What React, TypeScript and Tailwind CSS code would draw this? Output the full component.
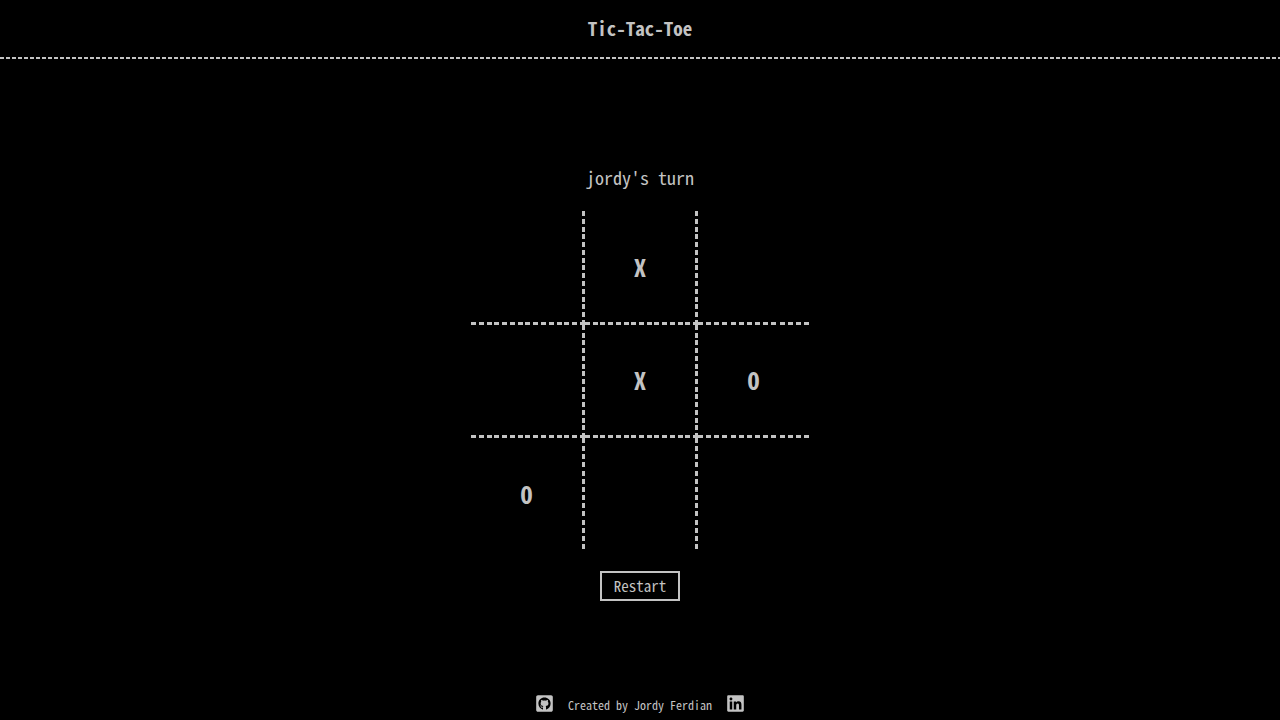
import { useState } from 'react';
import { FaGithubSquare, FaLinkedin } from 'react-icons/fa';

const start = ['', 'X', '', '', 'X', 'O', 'O', '', ''];

const rowLine: Record<number, string> = {
  0: 'bg-[repeating-linear-gradient(to_right,#c3c3c3_0_5px,transparent_5px_calc((100%-5px)/14))]',
  1: 'bg-[repeating-linear-gradient(to_right,#c3c3c3_0_5px,transparent_5px_calc((100%-5px)/14))]',
  2: 'bg-[repeating-linear-gradient(to_right,#c3c3c3_0_5px,transparent_5px_calc((100%-5px)/13))]',
};

const columnLine: Record<number, string> = {
  0: 'bg-[repeating-linear-gradient(to_bottom,#c3c3c3_0_5px,transparent_5px_calc((100%-5px)/14))]',
  1: 'bg-[repeating-linear-gradient(to_bottom,#c3c3c3_0_5px,transparent_5px_calc((100%-5px)/14))]',
  2: 'bg-[repeating-linear-gradient(to_bottom,#c3c3c3_0_5px,transparent_5px_calc((100%-5px)/13))]',
};

type SquareProps = {
  index: number;
  mark: string;
  onPlay: () => void;
};

function Square({ index, mark, onPlay }: SquareProps) {
  const column = index % 3;
  const row = Math.floor(index / 3);
  return (
    <div className="relative flex">
      <button
        type="button"
        aria-label={`Square ${index + 1} ${mark}`}
        onClick={onPlay}
        className={`flex flex-1 items-center justify-center text-2xl font-bold ${column < 2 ? 'pr-[3px]' : ''} ${row < 2 ? 'pb-[3px]' : ''}`}
      >
        {mark}
      </button>
      {column < 2 && <span className={`absolute inset-y-0 right-0 w-[3px] ${columnLine[row]}`} />}
      {row < 2 && <span className={`absolute inset-x-0 bottom-0 h-[3px] ${rowLine[column]}`} />}
    </div>
  );
}

export default function App() {
  const [cells, setCells] = useState(start);
  const [turn, setTurn] = useState('X');

  const play = (index: number) => {
    if (cells[index]) return;
    setCells(cells.map((cell, i) => (i === index ? turn : cell)));
    setTurn(turn === 'X' ? 'O' : 'X');
  };

  const restart = () => {
    setCells(Array(9).fill(''));
    setTurn('X');
  };

  return (
    <div className="flex min-h-screen flex-col bg-black font-['Noto_Sans_Mono_CJK_JP','Liberation_Mono',monospace] text-[#c3c3c3]">
      <header>
        <h1 className="pt-[15px] pb-[17px] text-center text-[19px] leading-[25px] font-bold">Tic-Tac-Toe</h1>
        <div className="h-0.5 bg-[repeating-linear-gradient(to_right,#c3c3c3_0_4px,transparent_4px_6px)]" />
      </header>
      <main className="flex flex-1 flex-col items-center justify-center pt-4">
        <p className="mb-[22px] text-lg leading-6">jordy's turn</p>
        <div className="grid grid-cols-[114px_113px_111px] grid-rows-[114px_113px_111px]">
          {cells.map((cell, index) => (
            <Square key={index} index={index} mark={cell} onPlay={() => play(index)} />
          ))}
        </div>
        <button
          type="button"
          onClick={restart}
          className="mt-[22px] h-[30px] w-20 border-2 border-[#c3c3c3] text-[15px] leading-6"
        >
          Restart
        </button>
      </main>
      <footer className="flex items-center justify-center gap-3.5 pb-[5px]">
        <a href="#github" aria-label="GitHub">
          <FaGithubSquare className="size-[19px]" />
        </a>
        <p className="pt-1 text-xs leading-5">Created by Jordy Ferdian</p>
        <a href="#linkedin" aria-label="LinkedIn">
          <FaLinkedin className="size-[19px]" />
        </a>
      </footer>
    </div>
  );
}
